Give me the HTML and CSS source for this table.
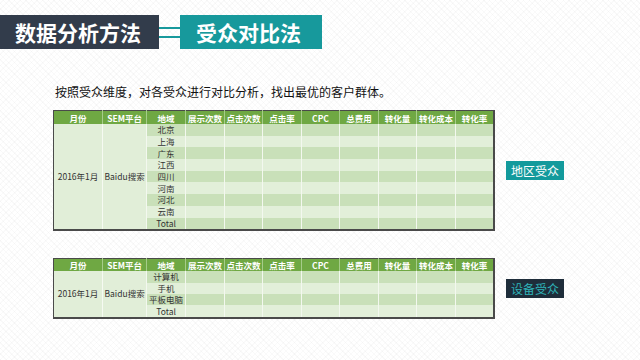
FILE: index.html
```html
<!DOCTYPE html>
<html lang="zh">
<head>
<meta charset="utf-8">
<link rel="stylesheet" href="styles.css">
</head>
<body>
<div class="page">
  <header class="title-bar">
    <div class="title-main">数据分析方法</div>
    <div class="connector"><span></span><span></span></div>
    <div class="title-sub">受众对比法</div>
  </header>

  <p class="intro">按照受众维度，对各受众进行对比分析，找出最优的客户群体。</p>

  <section class="block block-region">
    <table class="data">
      <colgroup>
        <col class="c-month"><col class="c-sem"><col class="c-area">
        <col><col><col><col><col><col><col><col>
      </colgroup>
      <thead>
        <tr><th>月份</th><th>SEM平台</th><th>地域</th><th>展示次数</th><th>点击次数</th><th>点击率</th><th>CPC</th><th>总费用</th><th>转化量</th><th>转化成本</th><th>转化率</th></tr>
      </thead>
      <tbody>
        <tr class="dk"><td class="merged" rowspan="9">2016年1月</td><td class="merged" rowspan="9">Baidu搜索</td><td>北京</td><td></td><td></td><td></td><td></td><td></td><td></td><td></td><td></td></tr>
        <tr class="lt"><td>上海</td><td></td><td></td><td></td><td></td><td></td><td></td><td></td><td></td></tr>
        <tr class="dk"><td>广东</td><td></td><td></td><td></td><td></td><td></td><td></td><td></td><td></td></tr>
        <tr class="lt"><td>江西</td><td></td><td></td><td></td><td></td><td></td><td></td><td></td><td></td></tr>
        <tr class="dk"><td>四川</td><td></td><td></td><td></td><td></td><td></td><td></td><td></td><td></td></tr>
        <tr class="lt"><td>河南</td><td></td><td></td><td></td><td></td><td></td><td></td><td></td><td></td></tr>
        <tr class="dk"><td>河北</td><td></td><td></td><td></td><td></td><td></td><td></td><td></td><td></td></tr>
        <tr class="lt"><td>云南</td><td></td><td></td><td></td><td></td><td></td><td></td><td></td><td></td></tr>
        <tr class="dk"><td>Total</td><td></td><td></td><td></td><td></td><td></td><td></td><td></td><td></td></tr>
      </tbody>
    </table>
    <div class="tag tag-teal">地区受众</div>
  </section>

  <section class="block block-device">
    <table class="data data-small">
      <colgroup>
        <col class="c-month"><col class="c-sem"><col class="c-area">
        <col><col><col><col><col><col><col><col>
      </colgroup>
      <thead>
        <tr><th>月份</th><th>SEM平台</th><th>地域</th><th>展示次数</th><th>点击次数</th><th>点击率</th><th>CPC</th><th>总费用</th><th>转化量</th><th>转化成本</th><th>转化率</th></tr>
      </thead>
      <tbody>
        <tr class="dk"><td class="merged" rowspan="4">2016年1月</td><td class="merged" rowspan="4">Baidu搜索</td><td>计算机</td><td></td><td></td><td></td><td></td><td></td><td></td><td></td><td></td></tr>
        <tr class="lt"><td>手机</td><td></td><td></td><td></td><td></td><td></td><td></td><td></td><td></td></tr>
        <tr class="dk"><td>平板电脑</td><td></td><td></td><td></td><td></td><td></td><td></td><td></td><td></td></tr>
        <tr class="lt"><td>Total</td><td></td><td></td><td></td><td></td><td></td><td></td><td></td><td></td></tr>
      </tbody>
    </table>
    <div class="tag tag-dark">设备受众</div>
  </section>
</div>
</body>
</html>
```

FILE: styles.css
```css
html, body {
  margin: 0;
  padding: 0;
}
body {
  width: 640px;
  height: 360px;
  overflow: hidden;
  font-family: "Noto Sans CJK SC", "Noto Sans", sans-serif;
  color: #222;
  background-color: #ffffff;
  background-image: repeating-linear-gradient(45deg, rgba(0,0,0,0.025) 0 1px, transparent 1px 4px),
                    repeating-linear-gradient(-45deg, rgba(0,0,0,0.018) 0 1px, transparent 1px 4px);
}
.page {
  padding-top: 15px;
}
.title-bar {
  display: flex;
  align-items: stretch;
  height: 34px;
}
.title-main {
  background: #323c4b;
  color: #fff;
  font-weight: 700;
  font-size: 21px;
  line-height: 34px;
  padding: 0 16px 0 15px;
  width: 128px;
  white-space: nowrap;
}
.connector {
  width: 21px;
  display: flex;
  flex-direction: column;
  justify-content: center;
  gap: 7px;
}
.connector span {
  display: block;
  height: 2px;
  background: #17999c;
}
.title-sub {
  background: #17999c;
  color: #fff;
  font-weight: 700;
  font-size: 21px;
  line-height: 34px;
  padding: 0 21px 0 16px;
  white-space: nowrap;
}
.intro {
  margin: 35px 0 0 55px;
  font-size: 12px;
  line-height: 16px;
  color: #111;
}
.block {
  display: flex;
  align-items: center;
  gap: 11px;
  margin-left: 53px;
}
.block-region {
  margin-top: 10px;
}
.block-device {
  margin-top: 27px;
}
.data {
  border-collapse: collapse;
  table-layout: fixed;
  width: 442px;
  border: 1px solid #4a4a4a;
  border-right-width: 2px;
  border-bottom-width: 2px;
  font-size: 8.5px;
}
.data col { width: 38.5px; }
.data col.c-month { width: 49px; }
.data col.c-sem { width: 44px; }
.data col.c-area { width: 39px; }
.data th {
  background: #6fa843;
  color: #fff;
  font-weight: 700;
  height: 13px;
  padding: 0;
  line-height: 12px;
  border-left: 1px solid #a6cc8a;
  text-align: center;
  white-space: nowrap;
  overflow: hidden;
}
.data th:first-child { border-left: none; }
.data td {
  height: 11.7px;
  padding: 0;
  line-height: 11px;
  text-align: center;
  color: #333;
  border-left: 1px solid #f3f8ef;
  white-space: nowrap;
}
.data td.merged {
  border-left: none;
}
.data td.merged + td.merged { border-left: 1px solid #f6faf2; }
.data tr.dk td { background: #c9e0b9; }
.data tr.lt td { background: #e2efd9; }
.data tr td.merged { background: #e1eed8; }
.data-small th { height: 12px; }
.data-small td { height: 11.4px; }
.tag {
  font-size: 12px;
  line-height: 19px;
  padding: 0 5px;
  white-space: nowrap;
}
.tag-teal {
  background: #139a9c;
  color: #fff;
}
.tag-dark {
  background: #1e2d3a;
  color: #2fb3b8;
}
```
